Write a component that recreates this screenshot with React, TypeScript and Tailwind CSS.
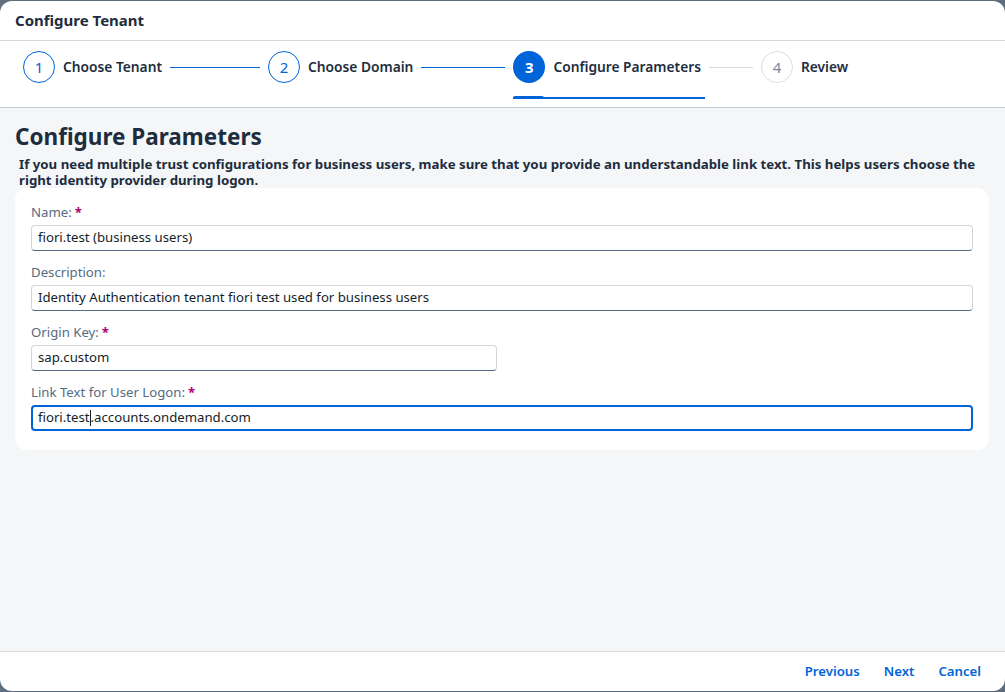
import React from 'react'

const steps = [
  { n: 1, label: 'Choose Tenant', state: 'done' },
  { n: 2, label: 'Choose Domain', state: 'done' },
  { n: 3, label: 'Configure Parameters', state: 'active' },
  { n: 4, label: 'Review', state: 'todo' },
] as const

function StepCircle({ n, state }: { n: number; state: 'done' | 'active' | 'todo' }) {
  if (state === 'active')
    return <div className="w-8 h-8 rounded-full bg-[#0064d9] text-white text-[15px] font-bold flex items-center justify-center shrink-0">{n}</div>
  if (state === 'todo')
    return <div className="w-8 h-8 rounded-full border border-[#d9dde1] text-[#758ca4] text-[15px] flex items-center justify-center shrink-0">{n}</div>
  return <div className="w-8 h-8 rounded-full border border-[#0064d9] text-[#0064d9] text-[15px] flex items-center justify-center shrink-0">{n}</div>
}

function Field({ label, value, required, width, focused }: { label: string; value: string; required?: boolean; width?: string; focused?: boolean }) {
  return (
    <div className="flex flex-col">
      <label className="text-[13.2px] text-[#556b82] leading-[18px] h-[18px]">
        {label}
        {required && <span className="text-[#aa0078] font-bold ml-[3px]">*</span>}
      </label>
      <div
        className={
          'mt-[4px] h-[26px] rounded-[4px] bg-white flex items-center text-[13.2px] text-[#131e29] ' +
          (focused
            ? 'border-2 border-[#0064d9] px-[5px]'
            : 'border border-[#d0d5dc] border-b-[#556b81] px-[6px]') +
          ' ' + (width ?? 'w-full')
        }
      >
        {focused ? (
          <span>
            fiori.test<span className="inline-block w-px h-[16px] bg-[#131e29] align-middle -mt-[2px]" />.accounts.ondemand.com
          </span>
        ) : (
          value
        )}
      </div>
    </div>
  )
}

export default function App() {
  return (
    <div className="w-[1005px] h-[692px] bg-[#5f6e7c] pt-px pb-px" style={{ fontFamily: '"Noto Sans", Inter, sans-serif' }}>
      <div className="h-[690px] bg-white rounded-[12px] overflow-hidden flex flex-col">
        {/* Title */}
        <div className="h-[40px] flex items-center px-[15px] border-b border-[#d9d9d9] shrink-0">
          <span className="text-[15px] font-bold text-[#1d2d3e]">Configure Tenant</span>
        </div>

        {/* Steps */}
        <div className="h-[67px] border-b border-[#c5cbd2] shrink-0 relative flex items-start pl-[23px] pt-[10px]">
          {steps.map((s, i) => (
            <div key={s.n} className="flex items-center relative">
              <StepCircle n={s.n} state={s.state} />
              <span className="ml-[8px] text-[13.75px] font-semibold text-[#1d2d3e] whitespace-nowrap">{s.label}</span>
              {i < steps.length - 1 && (
                <div
                  className={
                    'h-px mx-[8px] ' +
                    (s.state === 'done' ? 'bg-[#0064d9] ' : 'bg-[#d9dde1] ') +
                    (i === 0 ? 'w-[90px]' : i === 1 ? 'w-[84px]' : 'w-[44px]')
                  }
                />
              )}
              {s.state === 'active' && (
                <>
                  <div className="absolute left-0 top-[46px] w-[192px] h-[2px] bg-[#0064d9]" />
                  <div className="absolute left-0 top-[45px] w-[31px] h-[3px] rounded-t-[2px] bg-[#0064d9]" />
                </>
              )}
            </div>
          ))}
        </div>

        {/* Content */}
        <div className="flex-1 bg-[#f5f6f7] pl-[15px] pt-[14px] pr-[16px]">
          <h1 className="text-[22.5px] font-bold text-[#1d2d3e] leading-[30px]">Configure Parameters</h1>
          <p className="mt-[4px] ml-[4px] text-[13.25px] font-bold text-[#1d2d3e] leading-[16px]">
            If you need multiple trust configurations for business users, make sure that you provide an understandable link text. This helps users choose the right identity provider during logon.
          </p>
          <div className="bg-white rounded-[12px] px-[16px] pt-[15px] pb-[19px] flex flex-col gap-[12px]">
            <Field label="Name:" required value="fiori.test (business users)" />
            <Field label="Description:" value="Identity Authentication tenant fiori test used for business users" />
            <Field label="Origin Key:" required value="sap.custom" width="w-[466px]" />
            <Field label="Link Text for User Logon:" required value="" focused />
          </div>
        </div>

        {/* Footer */}
        <div className="h-[40px] pt-px border-t border-[#d9d9d9] shrink-0 flex items-center justify-end pr-[24px] gap-[24px] text-[13.2px] font-semibold text-[#0064d9]">
          <span>Previous</span>
          <span>Next</span>
          <span>Cancel</span>
        </div>
      </div>
    </div>
  )
}
